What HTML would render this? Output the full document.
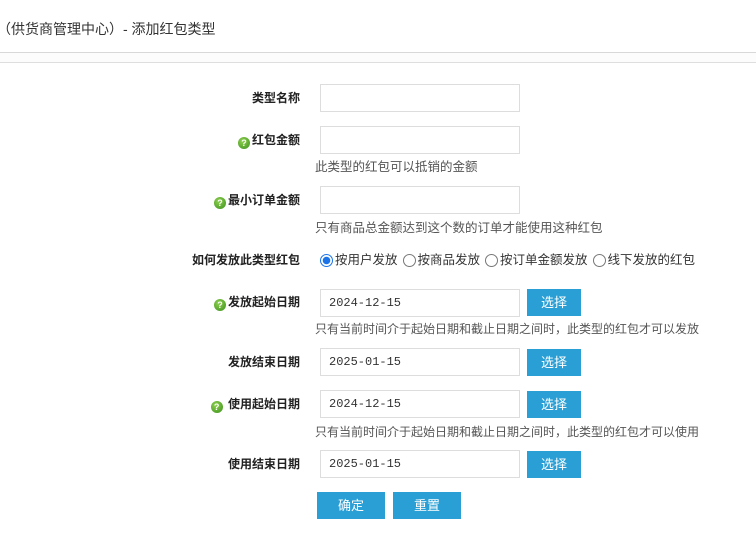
<!DOCTYPE html>
<html><head><meta charset="utf-8"><style>
*{margin:0;padding:0;box-sizing:border-box}
body{width:756px;height:536px;background:#fff;font-family:"Liberation Sans","Noto Sans CJK SC",sans-serif;font-size:12px;color:#333;position:relative;overflow:hidden}
.a{position:absolute;white-space:nowrap}
.t{left:-3px;top:19px;font-size:14px;color:#333}
.l1{left:0;top:52px;width:756px;height:11px;border-top:1px solid #d8d8d8;border-bottom:1px solid #dedede;background:#fcfcfc}
.lab{right:456px;font-weight:bold;color:#222;line-height:16px}
.in{left:320px;width:200px;height:28px;border:1px solid #ddd;background:#fff;font-family:"Liberation Mono",monospace;font-size:12px;line-height:26px;padding:0 0 0 8px;color:#333}
.btn{background:#2a9fd6;color:#fff;text-align:center;height:27px;line-height:27px;font-size:13px}
.sel{left:527px;width:54px}
.hint{left:315px;color:#555;line-height:16px;font-size:12.5px}
.h2{font-size:12px}
.q{display:inline-block;width:12px;height:12px;border-radius:50%;background:radial-gradient(circle at 40% 35%,#8fd14f,#3a8f1c);color:#fff;font-size:9px;line-height:12px;text-align:center;vertical-align:-2px;margin-right:2px;font-weight:bold}
.r{display:inline-block;width:13px;height:13px;border:1px solid #777;border-radius:50%;vertical-align:-3px;margin:0 2px 0 5px;background:#fff}
.r.on{border-color:#1a73e8;background:radial-gradient(circle,#1a73e8 0 3.5px,#fff 4px)}
</style></head><body>
<div class="a t">（供货商管理中心）- 添加红包类型</div>
<div class="a l1"></div>

<div class="a lab" style="top:90px">类型名称</div>
<div class="a in" style="top:84px"></div>

<div class="a lab" style="top:132px"><span class="q">?</span>红包金额</div>
<div class="a in" style="top:126px"></div>
<div class="a hint" style="top:159px">此类型的红包可以抵销的金额</div>

<div class="a lab" style="top:192px"><span class="q">?</span>最小订单金额</div>
<div class="a in" style="top:186px"></div>
<div class="a hint" style="top:220px">只有商品总金额达到这个数的订单才能使用这种红包</div>

<div class="a lab" style="top:252px">如何发放此类型红包</div>
<div class="a" style="left:315px;top:252px;line-height:16px;font-size:12.5px"><span class="r on"></span>按用户发放<span class="r"></span>按商品发放<span class="r"></span>按订单金额发放<span class="r"></span>线下发放的红包</div>

<div class="a lab" style="top:294px"><span class="q">?</span>发放起始日期</div>
<div class="a in" style="top:289px">2024-12-15</div>
<div class="a btn sel" style="top:289px">选择</div>
<div class="a hint h2" style="top:321px">只有当前时间介于起始日期和截止日期之间时，此类型的红包才可以发放</div>

<div class="a lab" style="top:354px">发放结束日期</div>
<div class="a in" style="top:348px">2025-01-15</div>
<div class="a btn sel" style="top:349px">选择</div>

<div class="a lab" style="top:396px"><span class="q">?</span> 使用起始日期</div>
<div class="a in" style="top:390px">2024-12-15</div>
<div class="a btn sel" style="top:391px">选择</div>
<div class="a hint h2" style="top:424px">只有当前时间介于起始日期和截止日期之间时，此类型的红包才可以使用</div>

<div class="a lab" style="top:456px">使用结束日期</div>
<div class="a in" style="top:450px">2025-01-15</div>
<div class="a btn sel" style="top:451px">选择</div>

<div class="a btn" style="left:317px;top:492px;width:68px">确定</div>
<div class="a btn" style="left:393px;top:492px;width:68px">重置</div>
</body></html>
